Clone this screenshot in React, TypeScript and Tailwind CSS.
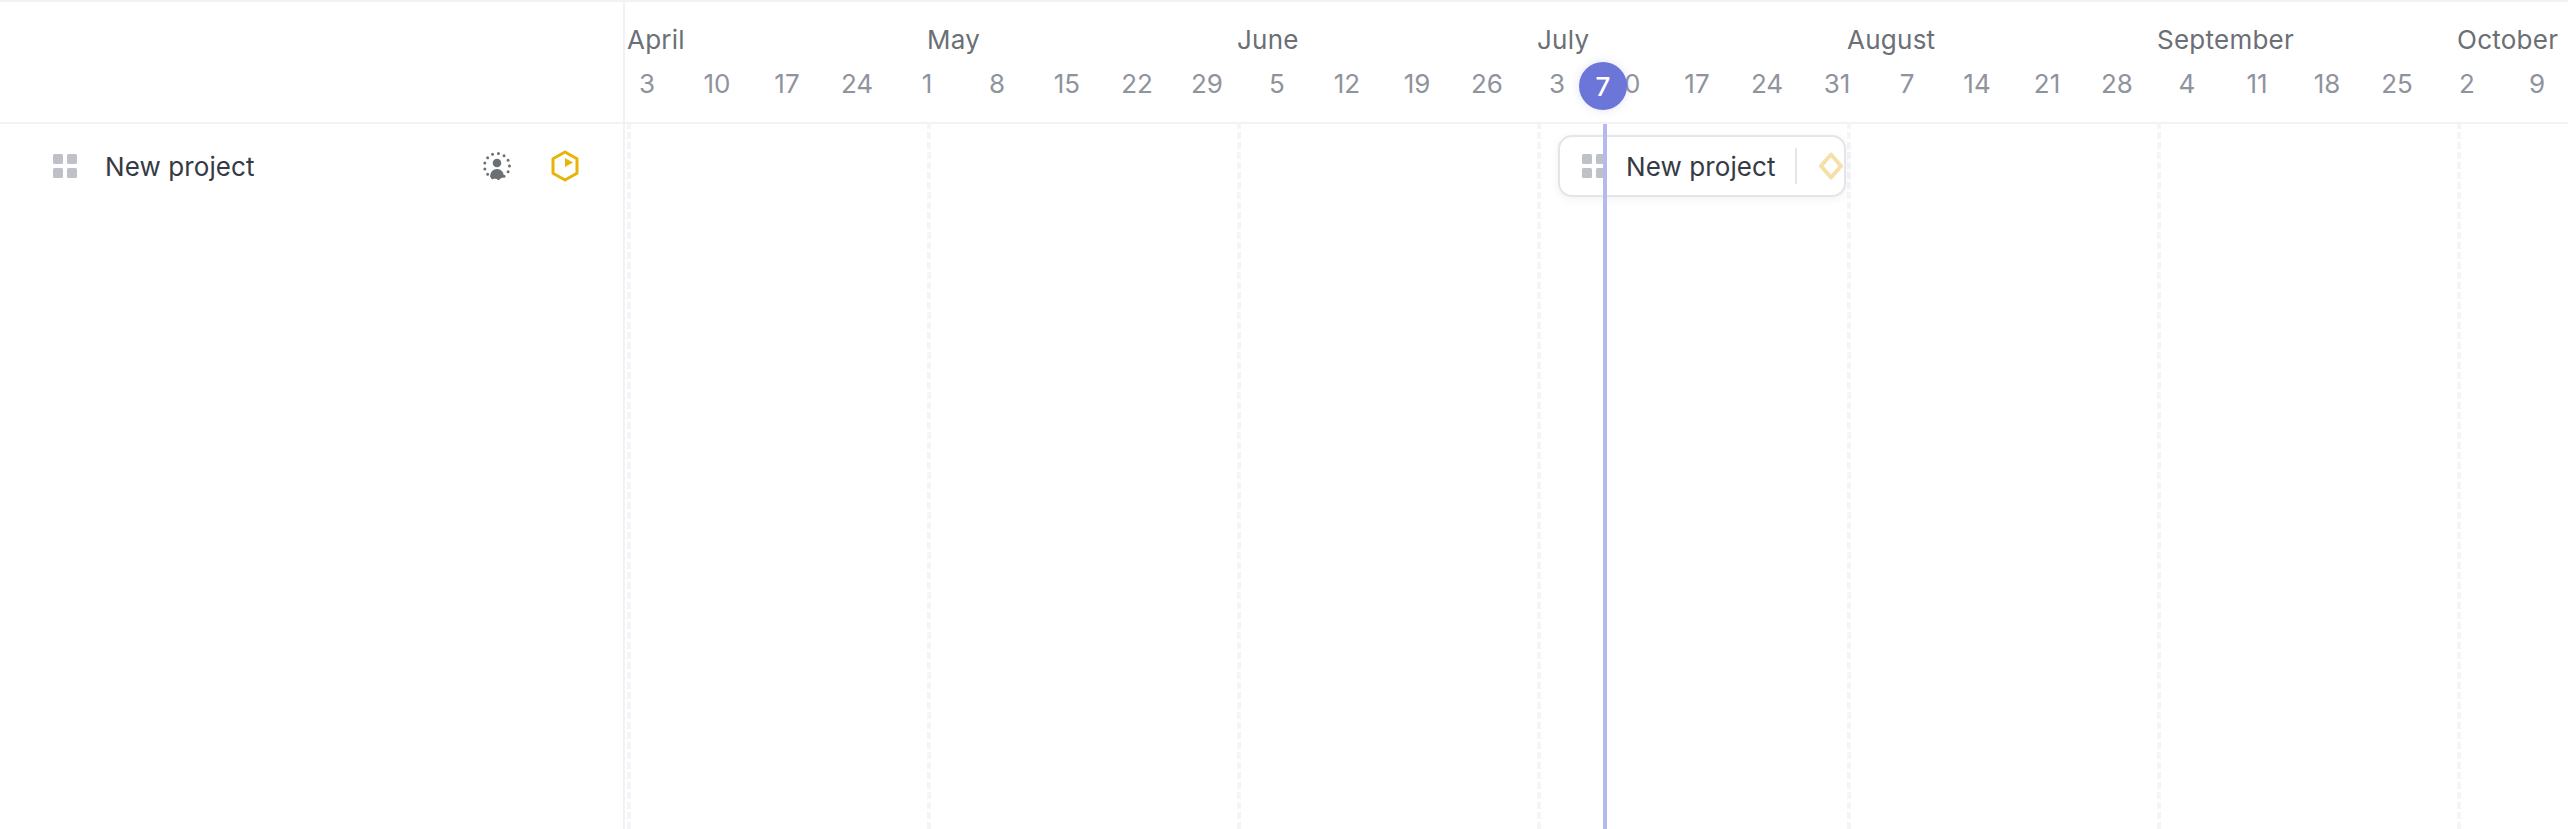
const months = [
  { name: 'April', width: 'w-[300px]' },
  { name: 'May', width: 'w-[310px]' },
  { name: 'June', width: 'w-[300px]' },
  { name: 'July', width: 'w-[310px]' },
  { name: 'August', width: 'w-[310px]' },
  { name: 'September', width: 'w-[300px]' },
  { name: 'October', width: 'w-[111px]' },
];

const weeks = [
  '3', '10', '17', '24', '1', '8', '15', '22', '29', '5', '12', '19', '26', '3',
  '10', '17', '24', '31', '7', '14', '21', '28', '4', '11', '18', '25', '2', '9',
];

const GripIcon = () => (
  <svg width="24" height="24" viewBox="0 0 24 24" className="shrink-0">
    <rect x="0" y="0" width="10" height="10" rx="1.500" fill="#bfc1c8" />
    <rect x="14" y="0" width="10" height="10" rx="1.500" fill="#bfc1c8" />
    <rect x="0" y="14" width="10" height="10" rx="1.500" fill="#bfc1c8" />
    <rect x="14" y="14" width="10" height="10" rx="1.500" fill="#bfc1c8" />
  </svg>
);

const AssigneeIcon = () => (
  <svg width="28" height="28" viewBox="0 0 28 28" className="shrink-0">
    <circle cx="14" cy="14" r="12.500" fill="none" stroke="#6b6f76" strokeWidth="3" strokeDasharray="0 6" strokeLinecap="round" />
    <circle cx="14" cy="11" r="4.300" fill="#6b6f76" />
    <path d="M7 25c.2-4.800 3-8 7-8s6.800 3.200 7 8c-2 1.300-4.300 2-7 2s-5-.7-7-2z" fill="#6b6f76" />
  </svg>
);

const StatusIcon = () => (
  <svg width="28" height="32" viewBox="0 0 28 32" className="shrink-0">
    <path d="M14 2 L26 8.800 V23.200 L14 30 L2 23.200 V8.800 Z" fill="none" stroke="#eab308" strokeWidth="3" strokeLinejoin="round" />
    <path d="M14 8 L22 12.500 L14 17 Z" fill="#eab308" />
  </svg>
);

const DiamondIcon = () => (
  <svg width="24" height="28" viewBox="0 0 24 28" className="shrink-0">
    <path d="M12 2.500 L22 14 L12 25.500 L2 14 Z" fill="none" stroke="#f6e0a8" strokeWidth="4" strokeLinejoin="round" />
  </svg>
);

export default function App() {
  return (
    <div className="h-[829px] w-[2568px] overflow-hidden bg-white font-['Inter',sans-serif] antialiased border-t-2 border-[#f1f1f6] flex">
      {/* Left list */}
      <div className="w-[625px] shrink-0 border-r-2 border-[#f1f1f6] flex flex-col">
        <div className="h-[120px] shrink-0 border-b-2 border-[#f1f1f6] box-content" />
        <div className="h-[84px] flex items-center pl-[53px] pr-[44px]">
          <GripIcon />
          <span className="ml-[28px] whitespace-nowrap text-[26px] tracking-[0.1px] text-[#363a44]">New project</span>
          <div className="ml-auto flex items-center gap-[40px]">
            <AssigneeIcon />
            <StatusIcon />
          </div>
        </div>
      </div>

      {/* Timeline */}
      <div className="relative flex-1 flex flex-col overflow-hidden">
        <div className="h-[120px] shrink-0 border-b-2 border-[#f1f1f6] box-content pl-[2px]">
          <div className="flex h-[56px] items-end">
            {months.map((m) => (
              <div key={m.name} className={`${m.width} shrink-0 whitespace-nowrap text-[26px] leading-[36px] tracking-[0.25px] text-[#6b6f76]`}>
                {m.name}
              </div>
            ))}
          </div>
          <div className="flex gap-[26px] mt-[8px] -ml-[2px]">
            {weeks.map((w, i) => (
              <div key={i} className="w-[44px] shrink-0 text-center text-[26px] leading-[36px] text-[#8f939c]">
                {w}
              </div>
            ))}
          </div>
        </div>

        <div className="relative flex-1 flex pl-[2px]">
          {months.map((m) => (
            <div key={m.name} className={`${m.width} shrink-0`}>
              <div className="h-full w-[4px] bg-[repeating-linear-gradient(to_bottom,#f4f4f9_0,#f4f4f9_5px,transparent_5px,transparent_8px,#f4f4f9_8px,#f4f4f9_10px)]" />
            </div>
          ))}

          {/* Bar on the timeline */}
          <div className="absolute left-[933px] top-[11px] flex h-[62px] w-[288px] items-center rounded-[14px] border-2 border-[#e4e5e9] bg-white pl-[22px] shadow-[0_2px_8px_rgba(0,0,0,0.06)]">
            <GripIcon />
            <span className="ml-[20px] whitespace-nowrap text-[26px] tracking-[0.1px] text-[#363a44]">New project</span>
            <div className="ml-[19px] mr-[22px] h-[36px] w-[2px] shrink-0 bg-[#e4e5e8]" />
            <DiamondIcon />
          </div>
        </div>

        {/* Today marker */}
        <div className="absolute left-[978px] top-[122px] bottom-0 w-[4px] bg-[#b5b9ec]" />
        <div className="absolute left-[954px] top-[60px] flex h-[48px] w-[48px] items-center justify-center rounded-full bg-[#6b76d8] text-[26px] font-medium text-white shadow-[0_0_10px_rgba(107,118,216,0.2)]">
          7
        </div>
      </div>
    </div>
  );
}
